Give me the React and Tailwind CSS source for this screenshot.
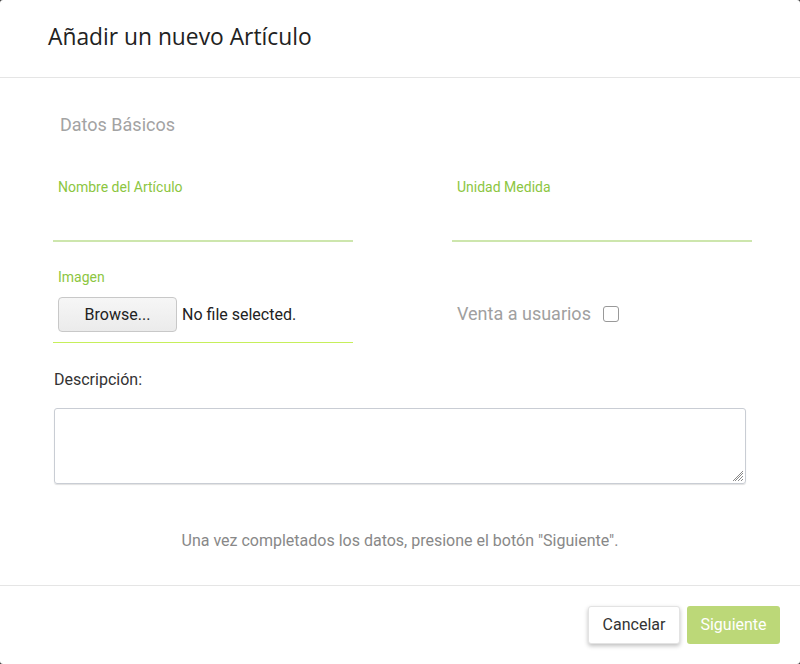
import React from "react";

export default function App() {
  return (
    <div className="w-[800px] h-[664px] bg-[#3a3a3a]" style={{ fontFamily: "Roboto, 'Liberation Sans', sans-serif" }}>
      <div className="w-full h-full bg-white rounded-[3px] flex flex-col">
        <div className="h-[78px] border-b border-[#e5e5e5] flex items-center pl-[48px] shrink-0">
          <h1 className="text-[22.8px] text-[#222] pb-[2px]" style={{ fontFamily: "'Open Sans', sans-serif" }}>
            Añadir un nuevo Artículo
          </h1>
        </div>
        <div className="flex-1 relative">
          <div className="pl-[60px] pt-[35px] text-[18px] leading-[24px] text-[#a3a3a3]">Datos Básicos</div>
          <div className="pl-[53px] grid grid-cols-[300px_300px] gap-x-[99px] mt-[42px]">
            <div>
              <div className="pl-[5px] text-[14px] leading-[16px] text-[#8cc63f]">Nombre del Artículo</div>
              <div className="mt-[45px] h-[2px] bg-[#cde6ad]"></div>
            </div>
            <div>
              <div className="pl-[5px] text-[14px] leading-[16px] text-[#8cc63f]">Unidad Medida</div>
              <div className="mt-[45px] h-[2px] bg-[#cde6ad]"></div>
            </div>
            <div className="mt-[27px]">
              <div className="pl-[5px] text-[14px] leading-[16px] text-[#8cc63f]">Imagen</div>
              <div className="pl-[5px] mt-[12px] flex items-center">
                <div className="w-[119px] h-[35px] rounded-[4px] border border-[#c8c8c8] bg-gradient-to-b from-[#f6f6f6] to-[#ebebeb] flex items-center justify-center text-[16px] text-[#222]">
                  Browse...
                </div>
                <span className="ml-[5px] text-[16px] text-[#222]">No file selected.</span>
              </div>
              <div className="mt-[10px] h-px bg-[#c6ef5b]"></div>
            </div>
            <div className="mt-[27px] flex items-start">
              <div className="pl-[5px] mt-[33px] flex items-center">
                <span className="text-[18px] text-[#a0a0a0] leading-[24px]">Venta a usuarios</span>
                <span className="ml-[12px] w-[16px] h-[16px] border border-[#999] rounded-[3px] bg-white inline-block"></span>
              </div>
            </div>
          </div>
          <div className="pl-[54px] mt-[27px] text-[16px] leading-[20px] text-[#333]">Descripción:</div>
          <div className="pl-[54px] pr-[54px] mt-[18px]">
            <div className="relative h-[76px] border border-[#c9cdd4] rounded-[3px] shadow-[0_1px_1px_rgba(0,0,0,0.12)]">
              <svg className="absolute right-[1px] bottom-[1px]" width="11" height="11" viewBox="0 0 11 11">
                <path d="M10 2 L2 10 M10 5 L5 10 M10 8 L8 10 M10 0 L0 10" stroke="#8a8a8a" strokeWidth="1" />
              </svg>
            </div>
          </div>
          <div className="mt-[47px] text-center text-[16px] leading-[20px] text-[#888]">
            Una vez completados los datos, presione el botón "Siguiente".
          </div>
        </div>
        <div className="h-[79px] border-t border-[#e5e5e5] flex items-center justify-end pr-[20px] gap-[7px] shrink-0">
          <button className="w-[92px] h-[38px] rounded-[3px] bg-white border border-[#e3e3e3] shadow-[0_2px_4px_rgba(0,0,0,0.25)] text-[16px] text-[#333]">
            Cancelar
          </button>
          <button className="w-[93px] h-[38px] rounded-[3px] bg-[#bcd878] text-[16px] text-white">
            Siguiente
          </button>
        </div>
      </div>
    </div>
  );
}
